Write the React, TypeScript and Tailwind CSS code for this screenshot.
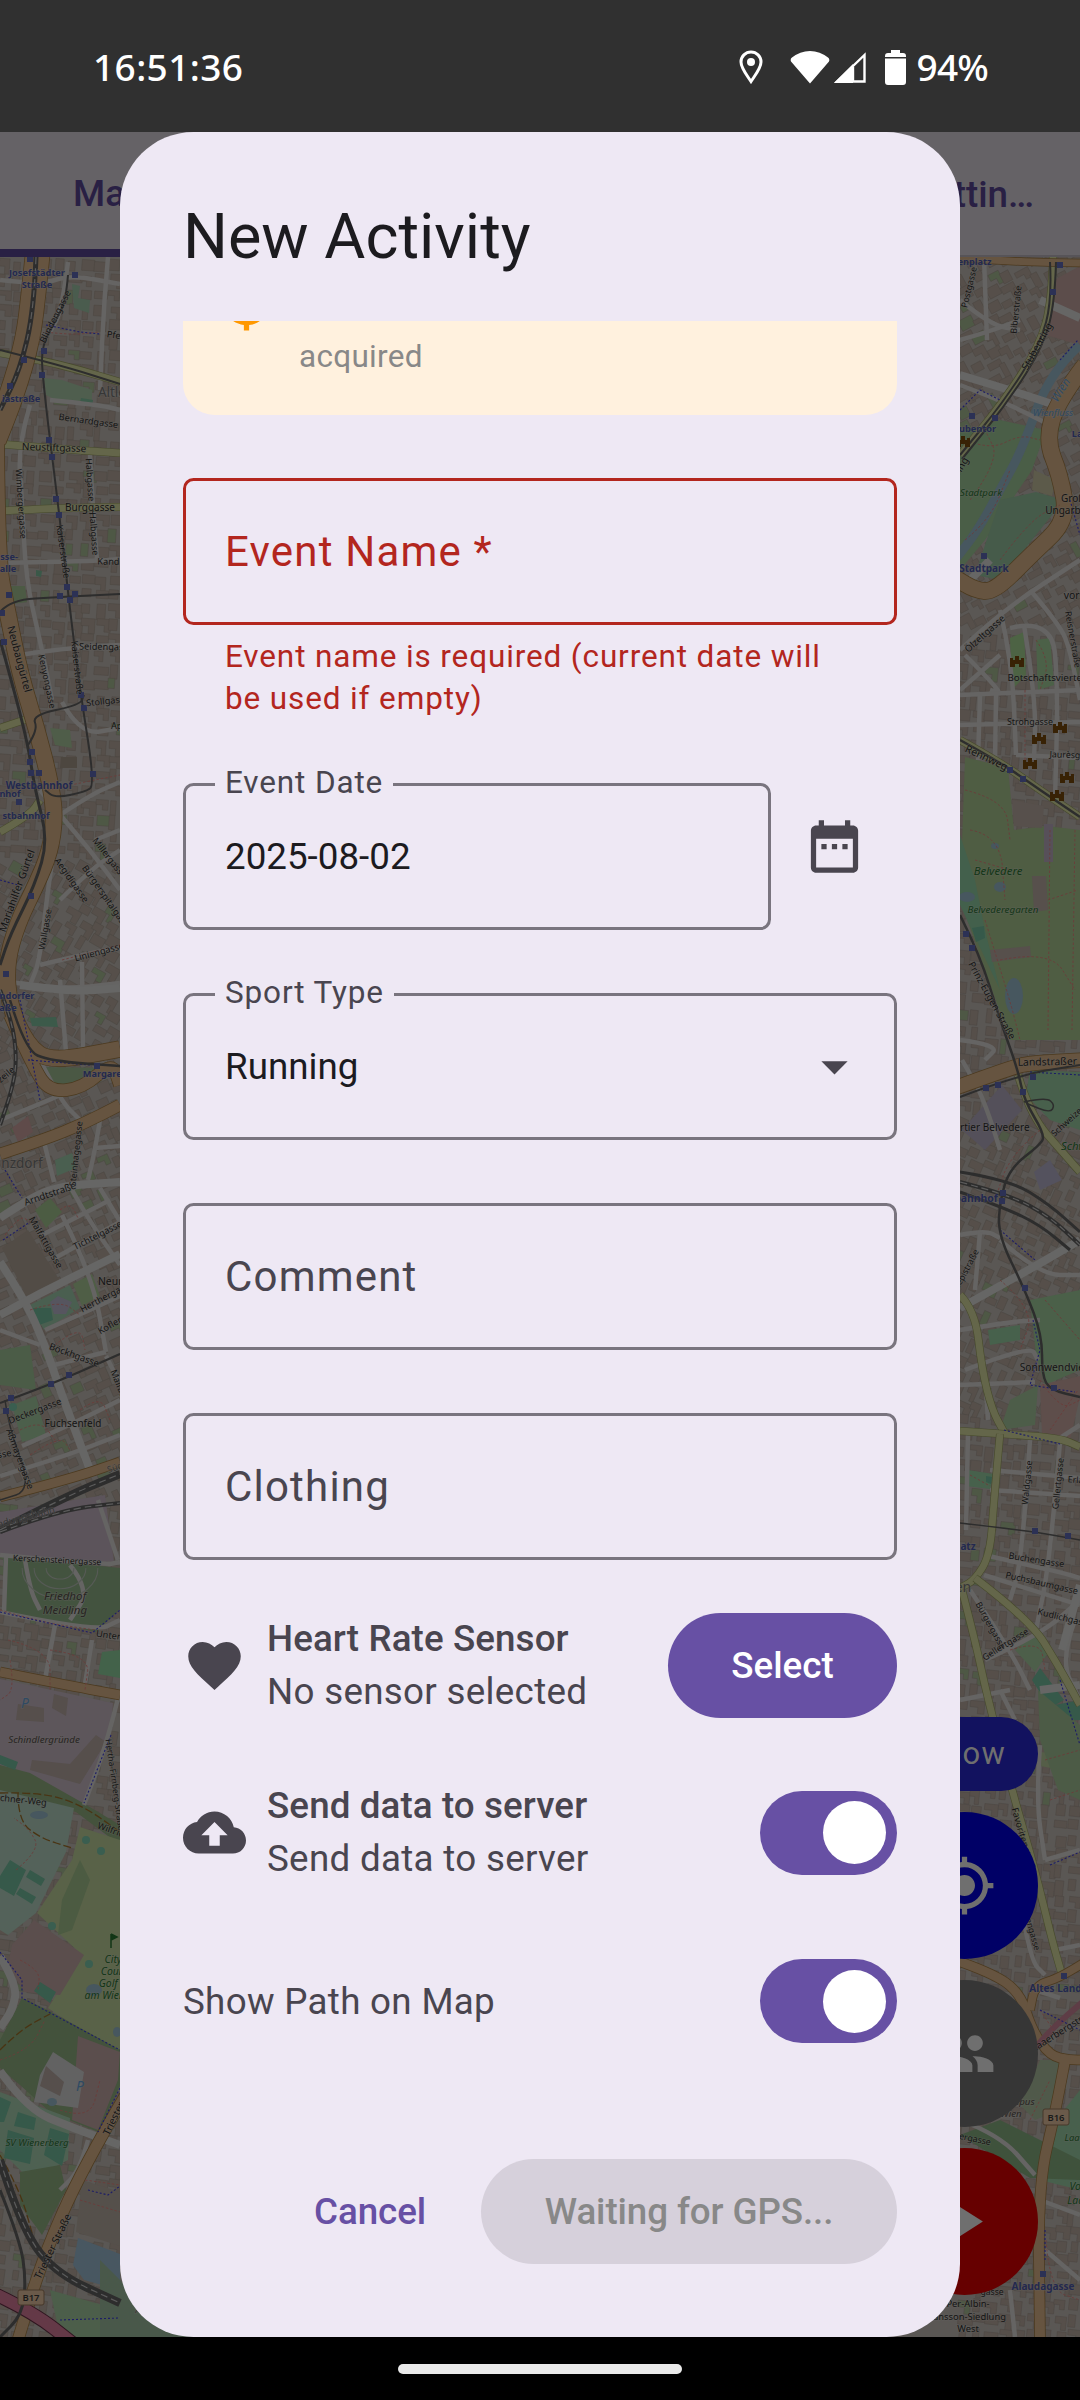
import React from "react";

type Pt = [number, number];
const line = (pts: Pt[]) => "M" + pts.map((p) => p.join(" ")).join("L");

/** Smooth open curve through the midpoints of the given points. */
const curve = (pts: Pt[]) => {
  let d = `M${pts[0][0]} ${pts[0][1]}`;
  for (let i = 1; i < pts.length - 1; i++) {
    const mx = (pts[i][0] + pts[i + 1][0]) / 2;
    const my = (pts[i][1] + pts[i + 1][1]) / 2;
    d += `Q${pts[i][0]} ${pts[i][1]} ${mx} ${my}`;
  }
  const e = pts[pts.length - 1];
  return d + `L${e[0]} ${e[1]}`;
};

const rng = (seed: number) => () => {
  seed = (seed * 1664525 + 1013904223) % 4294967296;
  return seed / 4294967296;
};

/** Building footprints for one strip of the city. */
function footprints(x0: number, x1: number, seed: number, tilt: (y: number) => number) {
  const r = rng(seed);
  const out: { d: string; t: string; f: string }[] = [];
  for (let y = 258; y < 2330; y += 15) {
    for (let x = x0; x < x1; x += 14) {
      const w = 9 + r() * 6;
      const h = 9 + r() * 7;
      const k = r();
      const d =
        k > 0.55
          ? `M0 0h${w}v${h}h${-w * 0.45}v${-h * 0.5}h${-w * 0.55}z`
          : k > 0.25
            ? `M0 0h${w}v${h * 0.7}h${-w}z`
            : `M0 0h${w * 0.6}v${h}h${-w * 0.6}z`;
      out.push({ d, t: `translate(${x + r() * 4} ${y + r() * 4}) rotate(${tilt(y)})`, f: r() > 0.93 ? "#4e5845" : "#564f4a" });
    }
  }
  return out;
}

const buildings = [
  ...footprints(-4, 122, 7, (y) => (y < 850 ? 4 : y < 1050 ? 30 : y < 1500 ? -24 : 8)),
  ...footprints(956, 1084, 23, (y) => (y < 620 ? -28 : y < 1100 ? 6 : y < 1400 ? 24 : 6)),
];

const areas: { c: string; p: Pt[] }[] = [
  { c: "#4a5c4e", p: [[72, 284], [80, 286], [78, 298], [90, 300], [89, 313], [74, 308]] },
  { c: "#4f5e4e", p: [[44, 378], [62, 380], [92, 390], [92, 405], [60, 402], [46, 395]] },
  { c: "#3c5a4a", p: [[81, 398], [93, 400], [92, 407], [80, 404]] },
  { c: "#4c5a44", p: [[10, 586], [25, 586], [27, 602], [12, 604]] },
  { c: "#3a5848", p: [[36, 570], [42, 571], [41, 577], [36, 576]] },
  { c: "#4f5d49", p: [[50, 728], [70, 730], [72, 748], [55, 745]] },
  { c: "#4d4740", p: [[61, 757], [77, 757], [77, 768], [60, 768]] },
  { c: "#3c5a4a", p: [[30, 1018], [56, 1017], [58, 1027], [32, 1026]] },
  { c: "#4a5844", p: [[40, 1067], [112, 1068], [100, 1082], [60, 1092]] },
  { c: "#5f4b4a", p: [[12, 1128], [28, 1116], [33, 1132], [18, 1142]] },
  { c: "#4a5f50", p: [[55, 1160], [72, 1153], [76, 1168], [57, 1176]] },
  { c: "#4c5c43", p: [[35, 1210], [50, 1198], [62, 1212], [46, 1228]] },
  { c: "#524c46", p: [[2, 1248], [28, 1230], [62, 1284], [26, 1296]] },
  { c: "#4a5f50", p: [[30, 1305], [70, 1285], [80, 1308], [44, 1330]] },
  { c: "#4f5e46", p: [[73, 1284], [92, 1274], [100, 1296], [82, 1306]] },
  { c: "#36594a", p: [[33, 1308], [51, 1308], [53, 1320], [39, 1325]] },
  { c: "#56555f", p: [[50, 1302], [58, 1296], [72, 1302], [66, 1314], [54, 1314]] },
  { c: "#4b5c47", p: [[0, 1350], [30, 1345], [36, 1390], [0, 1385]] },
  { c: "#4c5f4b", p: [[12, 1405], [36, 1396], [46, 1435], [22, 1442]] },
  { c: "#5c545b", p: [[0, 1512], [105, 1495], [114, 1562], [0, 1556]] },
  { c: "#43533f", p: [[3, 1556], [120, 1568], [120, 1609], [96, 1632], [3, 1612]] },
  { c: "#43624a", p: [[102, 1652], [120, 1650], [120, 1678], [98, 1674]] },
  { c: "#5d565b", p: [[0, 1679], [113, 1703], [110, 1736], [83, 1803], [0, 1768]] },
  { c: "#564f4c", p: [[32, 1760], [70, 1764], [96, 1735], [106, 1742], [80, 1784], [30, 1770]] },
  { c: "#564f4c", p: [[18, 1704], [44, 1708], [44, 1722], [16, 1720]] },
  { c: "#564f4c", p: [[54, 1694], [68, 1698], [66, 1716], [52, 1708]] },
  { c: "#44523c", p: [[0, 1765], [30, 1773], [83, 1803], [120, 1825], [120, 1845], [76, 1812], [0, 1792]] },
  { c: "#54625a", p: [[0, 1790], [74, 1808], [66, 1852], [36, 1913], [8, 1935], [0, 1930]] },
  { c: "#596248", p: [[80, 1827], [120, 1840], [120, 2056], [48, 2008], [82, 1955], [37, 1913], [72, 1860]] },
  { c: "#4c5b42", p: [[62, 1900], [80, 1860], [90, 1880], [72, 1930], [58, 1935]] },
  { c: "#5b4e4d", p: [[12, 1945], [34, 1920], [84, 1955], [60, 1995], [24, 1992], [8, 1965]] },
  { c: "#36594a", p: [[10, 1860], [26, 1870], [14, 1896], [0, 1888], [0, 1876]] },
  { c: "#36594a", p: [[30, 1870], [45, 1879], [41, 1886], [26, 1877]] },
  { c: "#36594a", p: [[20, 1888], [36, 1897], [32, 1904], [16, 1894]] },
  { c: "#36594a", p: [[40, 1982], [56, 1992], [50, 2003], [34, 1991]] },
  { c: "#36594a", p: [[0, 1755], [18, 1762], [15, 1770], [0, 1764]] },
  { c: "#43523c", p: [[22, 1998], [48, 2010], [120, 2050], [120, 2086], [98, 2132], [50, 2112], [20, 2085], [0, 2068], [0, 2040]] },
  { c: "#5b4e4d", p: [[78, 2036], [120, 2052], [118, 2080], [98, 2130], [72, 2120]] },
  { c: "#626262", p: [[53, 2052], [84, 2072], [78, 2108], [34, 2102], [40, 2075]] },
  { c: "#564f4c", p: [[46, 2066], [64, 2082], [60, 2096], [40, 2086]] },
  { c: "#4e6152", p: [[0, 2092], [70, 2118], [68, 2160], [30, 2180], [0, 2150]] },
  { c: "#36594a", p: [[0, 2097], [11, 2102], [4, 2122], [0, 2122]] },
  { c: "#36594a", p: [[18, 2112], [36, 2118], [34, 2130], [14, 2126]] },
  { c: "#36594a", p: [[50, 2128], [69, 2134], [62, 2166], [44, 2155]] },
  { c: "#36594a", p: [[8, 2130], [34, 2138], [30, 2164], [4, 2158]] },
  { c: "#43523c", p: [[20, 2172], [60, 2165], [66, 2190], [42, 2235], [20, 2205]] },
  { c: "#485761", p: [[78, 2238], [120, 2254], [120, 2290], [84, 2280], [73, 2265]] },
  { c: "#55504b", p: [[82, 2180], [120, 2192], [120, 2246], [76, 2232]] },
  { c: "#4c5e4a", p: [[50, 2290], [120, 2310], [132, 2337], [60, 2337]] },
  { c: "#49584a", p: [[150, 2310], [260, 2337], [100, 2337], [100, 2260]] },

  { c: "#5c4d4b", p: [[1054, 280], [1080, 266], [1080, 345], [1046, 335]] },
  { c: "#4a5e47", p: [[960, 432], [1000, 420], [1046, 430], [1032, 470], [985, 540], [960, 570]] },
  { c: "#465b4a", p: [[1000, 500], [1036, 492], [1064, 500], [1000, 580], [975, 575]] },
  { c: "#5c5a4a", p: [[1034, 470], [1056, 480], [1052, 496], [1032, 490]] },
  { c: "#4d6344", p: [[1010, 638], [1024, 632], [1026, 675], [1012, 690]] },
  { c: "#4c6148", p: [[1036, 640], [1050, 638], [1054, 685], [1038, 690]] },
  { c: "#4f5d43", p: [[965, 757], [1008, 768], [1014, 830], [1046, 826], [1080, 830], [1080, 1040], [1010, 1040], [960, 900]] },
  { c: "#43604c", p: [[960, 835], [975, 880], [985, 930], [1000, 990], [960, 905]] },
  { c: "#36594a", p: [[972, 928], [984, 926], [985, 938], [976, 942]] },
  { c: "#575059", p: [[1044, 824], [1053, 824], [1053, 862], [1044, 862]] },
  { c: "#57504c", p: [[1032, 876], [1046, 876], [1048, 910], [1034, 912]] },
  { c: "#57504c", p: [[1012, 800], [1044, 806], [1042, 828], [1014, 826]] },
  { c: "#57504c", p: [[990, 950], [1030, 946], [1031, 957], [992, 962]] },
  { c: "#48604c", p: [[1030, 1070], [1080, 1072], [1080, 1130], [1050, 1120], [1026, 1095]] },
  { c: "#54505a", p: [[962, 1130], [1002, 1085], [1022, 1110], [985, 1150]] },
  { c: "#54525e", p: [[1034, 1172], [1050, 1160], [1062, 1180], [1040, 1190]] },
  { c: "#4b6049", p: [[1030, 1300], [1080, 1290], [1080, 1370], [1045, 1385], [1036, 1355]] },
  { c: "#47614c", p: [[988, 1330], [1020, 1325], [1020, 1340], [990, 1345]] },
  { c: "#4d5d49", p: [[1010, 1400], [1038, 1385], [1035, 1425], [1000, 1430]] },
  { c: "#5e4e4b", p: [[1040, 1385], [1085, 1375], [1070, 1440], [1042, 1435]] },
  { c: "#47614c", p: [[968, 1470], [994, 1474], [990, 1489], [966, 1486]] },
  { c: "#36594a", p: [[986, 1476], [992, 1477], [991, 1484], [986, 1482]] },
  { c: "#4d5f4a", p: [[1015, 1650], [1032, 1634], [1050, 1650], [1035, 1672]] },
  { c: "#36594a", p: [[1040, 1668], [1064, 1700], [1050, 1708], [1032, 1680]] },
  { c: "#36594a", p: [[1050, 1706], [1080, 1700], [1080, 1720], [1046, 1722]] },
  { c: "#555e48", p: [[1040, 1752], [1064, 1754], [1062, 1770], [1040, 1766]] },
  { c: "#4c5b46", p: [[1038, 1690], [1080, 1725], [1080, 1800], [1058, 1790], [1040, 1740]] },
  { c: "#48604d", p: [[1048, 2130], [1080, 2090], [1080, 2190], [1040, 2180]] },
  { c: "#3f523c", p: [[960, 2135], [1000, 2120], [1080, 2160], [1080, 2180], [1030, 2178]] },
  { c: "#50594a", p: [[1040, 2060], [1062, 2060], [1060, 2110], [1035, 2120], [1020, 2105]] },
];

const water: Pt[][] = [[[1080, 345], [1050, 372], [1022, 450], [1000, 490], [978, 530], [955, 560]]];

const minor: Pt[][] = [
  [[0, 280], [40, 285], [70, 275], [120, 284]],
  [[108, 257], [104, 300], [100, 390]],
  [[68, 262], [62, 310], [50, 332]],
  [[30, 405], [18, 445], [22, 500], [26, 580], [40, 640], [52, 700]],
  [[0, 563], [96, 561], [120, 559]],
  [[90, 455], [93, 510], [97, 560]],
  [[20, 655], [66, 648], [120, 645]],
  [[62, 702], [80, 735], [120, 728]],
  [[50, 400], [100, 405], [120, 410]],
  [[40, 790], [60, 815], [90, 850], [120, 890]],
  [[60, 815], [50, 870], [40, 960], [30, 985]],
  [[60, 815], [90, 795], [120, 782]],
  [[40, 965], [80, 955], [120, 948]],
  [[60, 900], [90, 870], [120, 850]],
  [[10, 982], [60, 990], [120, 983]],
  [[82, 962], [83, 1050]],
  [[60, 980], [66, 1052]],
  [[95, 840], [120, 830]],
  [[0, 1120], [50, 1100], [82, 1085]],
  [[40, 1060], [60, 1100], [80, 1120]],
  [[44, 1142], [54, 1182]],
  [[100, 1120], [95, 1150], [88, 1180]],
  [[95, 1148], [120, 1146]],
  [[72, 1190], [90, 1222], [120, 1265]],
  [[100, 1188], [122, 1225]],
  [[42, 1235], [110, 1200]],
  [[55, 1258], [120, 1222]],
  [[62, 1215], [92, 1275], [106, 1352]],
  [[45, 1330], [90, 1310], [120, 1296]],
  [[0, 1330], [40, 1345]],
  [[54, 1365], [106, 1352]],
  [[0, 1476], [60, 1458], [120, 1435]],
  [[22, 1446], [70, 1425], [120, 1400]],
  [[106, 1356], [118, 1380]],
  [[0, 1555], [105, 1565], [120, 1562]],
  [[6, 1556], [4, 1612]],
  [[0, 1612], [95, 1632], [120, 1620]],
  [[98, 1500], [118, 1560]],
  [[55, 1625], [44, 1685]],
  [[92, 1640], [84, 1690]],
  [[25, 1560], [30, 1590], [40, 1610]],
  [[70, 1565], [90, 1590], [70, 1620]],
  [[120, 1690], [108, 1740], [84, 1805]],
  [[88, 2140], [80, 2170], [60, 2190]],
  [[960, 300], [990, 325], [1020, 330]],
  [[984, 257], [987, 340]],
  [[960, 340], [988, 332], [1020, 320]],
  [[960, 385], [1000, 400], [1050, 425]],
  [[1030, 590], [1060, 625], [1070, 650], [1080, 700]],
  [[960, 650], [1000, 612], [1080, 560]],
  [[965, 655], [1005, 695], [990, 690]],
  [[1000, 610], [1012, 660], [1016, 755]],
  [[1010, 628], [1052, 618], [1058, 690], [1055, 800]],
  [[1024, 625], [1036, 700], [1034, 760]],
  [[960, 695], [1080, 690]],
  [[960, 725], [1080, 722]],
  [[1016, 755], [1080, 758]],
  [[980, 695], [978, 760]],
  [[996, 695], [995, 765]],
  [[960, 690], [1000, 655]],
  [[960, 1040], [1000, 1045], [985, 1060]],
  [[1000, 1150], [985, 1100], [962, 1060]],
  [[960, 1235], [985, 1230], [1000, 1238]],
  [[980, 1232], [975, 1290]],
  [[1000, 1240], [1040, 1275], [1080, 1275]],
  [[960, 1330], [1010, 1322], [1040, 1320]],
  [[965, 1370], [1030, 1345], [1038, 1360]],
  [[960, 1385], [1035, 1382]],
  [[985, 1375], [988, 1420]],
  [[1060, 1438], [1080, 1425]],
  [[1030, 1440], [1022, 1560], [1010, 1600]],
  [[1060, 1442], [1050, 1560], [1036, 1630]],
  [[990, 1470], [1080, 1478]],
  [[990, 1490], [1080, 1496]],
  [[968, 1432], [966, 1530]],
  [[984, 1555], [1060, 1572], [1080, 1578]],
  [[984, 1575], [1080, 1605]],
  [[970, 1590], [1010, 1650], [1030, 1690]],
  [[985, 1660], [1040, 1635], [1080, 1600]],
  [[1075, 1620], [1060, 1660], [1080, 1700]],
  [[960, 1700], [1010, 1690]],
  [[1000, 1690], [1015, 1720]],
  [[1040, 1745], [1036, 1800], [1045, 1860]],
  [[1045, 1860], [1080, 1850]],
  [[1020, 1900], [1030, 1960], [1045, 1975]],
  [[1055, 1950], [1080, 1945]],
  [[1035, 1990], [1060, 1998]],
  [[960, 2120], [1000, 2135], [1035, 2175]],
  [[1040, 2200], [1080, 2215]],
  [[1045, 2250], [1080, 2280]],
  [[1010, 2290], [1015, 2337]],
];

const wide: Pt[][] = [
  [[0, 1262], [25, 1300], [45, 1345], [60, 1390], [90, 1470]],
  [[0, 1315], [40, 1293], [120, 1254]],
  [[0, 1218], [30, 1198], [60, 1186], [120, 1182]],
  [[0, 1956], [17, 1985], [13, 2009], [0, 2028]],
  [[0, 2071], [27, 2109], [73, 2128], [120, 2145]],
  [[960, 375], [1010, 390], [1055, 405]],
  [[960, 1308], [1020, 1275], [1080, 1240]],
  [[960, 590], [990, 560]],
  [[1040, 300], [1080, 318]],
  [[20, 985], [70, 992], [120, 988]],
  [[1080, 1585], [1062, 1650]],
  [[1040, 1690], [1080, 1685]],
];

const yellow: Pt[][] = [
  [[0, 353], [40, 360], [80, 370], [120, 382]],
  [[0, 444], [60, 449], [120, 453]],
  [[0, 511], [60, 508], [120, 507]],
  [[0, 728], [30, 718]],
  [[0, 832], [30, 815], [40, 800]],
  [[1053, 257], [1052, 300], [1040, 345], [1005, 400], [960, 455]],
  [[960, 740], [1000, 762], [1040, 790], [1080, 817]],
  [[1018, 1075], [1030, 1115], [1065, 1155], [1080, 1172]],
  [[960, 1295], [975, 1310], [982, 1370], [992, 1410], [1004, 1432]],
  [[960, 1431], [1004, 1434], [1060, 1438], [1080, 1447]],
  [[1000, 1434], [994, 1500], [990, 1555], [975, 1580], [960, 1588]],
  [[975, 1578], [1030, 1620], [1058, 1665], [1080, 1705]],
  [[962, 1590], [975, 1640], [988, 1700], [1012, 1790], [1035, 1870], [1052, 1940], [1062, 1975]],
];

const orange: { w: number; p: Pt[] }[] = [
  { w: 24, p: [[38, 250], [34, 290], [28, 340], [12, 395], [-6, 440]] },
  { w: 16, p: [[-4, 440], [-3, 560], [7, 610], [20, 674], [37, 730], [50, 781], [55, 816], [50, 852], [37, 883], [17, 924], [6, 964], [9, 1005], [27, 1045], [50, 1062], [120, 1049]] },
  { w: 12, p: [[10, 1015], [33, 1067], [50, 1092], [83, 1088], [112, 1062], [120, 1085]] },
  { w: 11, p: [[0, 1154], [43, 1140], [83, 1124], [120, 1105]] },
  { w: 9, p: [[0, 1497], [67, 1480], [120, 1462]] },
  { w: 9, p: [[0, 1672], [60, 1684], [120, 1695]] },
  { w: 11, p: [[125, 2096], [83, 2167], [43, 2257], [18, 2340]] },
  { w: 7, p: [[960, 258], [1020, 262], [1080, 263]] },
  { w: 16, p: [[1085, 365], [1058, 400], [1046, 440], [1060, 475], [1068, 520], [1030, 556], [994, 592], [975, 590], [955, 578]] },
  { w: 14, p: [[955, 1088], [1010, 1068], [1030, 1063], [1085, 1060]] },
  { w: 9, p: [[955, 1960], [990, 1972], [1020, 1992], [1032, 2030], [1050, 2056], [1070, 2060], [1085, 2060]] },
  { w: 8, p: [[1085, 1962], [1060, 1978], [1035, 1985], [1030, 2010]] },
  { w: 10, p: [[1066, 2055], [1056, 2110], [1038, 2185], [1040, 2337]] },
];

const rail: { w: number; p: Pt[] }[] = [
  { w: 5, p: [[36, 257], [34, 310], [20, 370], [0, 410]] },
  { w: 2, p: [[0, 350], [60, 365], [120, 384]] },
  { w: 2, p: [[68, 275], [66, 300], [56, 320], [42, 345], [42, 375], [60, 520], [70, 610], [80, 690], [95, 785], [85, 792], [55, 798], [45, 790]] },
  { w: 2, p: [[0, 612], [10, 600], [60, 597], [120, 594]] },
  { w: 3, p: [[0, 640], [14, 690], [28, 745], [35, 790], [48, 840], [35, 885], [10, 935], [0, 965]] },
  { w: 2, p: [[28, 745], [38, 730], [32, 715], [80, 705], [84, 695]] },
  { w: 4, p: [[0, 990], [12, 1020], [17, 1060], [12, 1090], [0, 1125]] },
  { w: 2.5, p: [[10, 1000], [25, 1050], [50, 1061], [120, 1066]] },
  { w: 2, p: [[0, 1403], [50, 1385], [120, 1354]] },
  { w: 1.5, p: [[5, 1400], [8, 1425], [32, 1490], [0, 1500]] },
  { w: 8, p: [[0, 1530], [67, 1496], [120, 1474]] },
  { w: 4, p: [[0, 1532], [60, 1510], [120, 1503]] },
  { w: 8, p: [[0, 2160], [20, 2224], [53, 2272], [120, 2303]] },
  { w: 3, p: [[0, 2190], [20, 2240], [26, 2280], [22, 2315], [0, 2337]] },
  { w: 2, p: [[1050, 262], [1052, 300], [1040, 345], [1005, 400], [960, 455]] },
  { w: 2, p: [[1056, 262], [1055, 300], [1044, 345], [1008, 402], [962, 459]] },
  { w: 2.5, p: [[960, 740], [1000, 762], [1040, 790], [1080, 817]] },
  { w: 2.5, p: [[960, 915], [980, 955], [1000, 1020], [1018, 1070], [1024, 1100], [1045, 1135], [1040, 1145], [1010, 1168], [1000, 1200], [998, 1235], [1025, 1290], [1042, 1335], [1042, 1375], [1050, 1390], [1080, 1397]] },
  { w: 2, p: [[960, 1097], [1018, 1075], [1080, 1065]] },
  { w: 1.5, p: [[1024, 1102], [1046, 1097], [1055, 1105], [1050, 1113], [1028, 1104]] },
  { w: 3, p: [[960, 1172], [1010, 1180], [1050, 1205], [1080, 1232]] },
  { w: 4, p: [[960, 1182], [1010, 1195], [1050, 1217], [1080, 1245]] },
  { w: 3, p: [[960, 1192], [1005, 1208], [1040, 1225], [1070, 1250]] },
  { w: 1.5, p: [[960, 1523], [1030, 1531], [1080, 1540]] },
];

const paths: Pt[][] = [
  [[46, 332], [70, 335], [100, 332]],
  [[62, 960], [120, 945]],
  [[48, 790], [70, 785], [120, 775]],
  [[10, 1660], [15, 1690], [0, 1700]],
  [[0, 1610], [40, 1622], [95, 1630]],
  [[8, 1640], [50, 1650], [50, 1690]],
  [[50, 1650], [90, 1655], [85, 1690]],
  [[16, 1870], [40, 1850], [30, 1830], [14, 1818]],
  [[20, 1960], [40, 1970], [38, 1990]],
  [[0, 2060], [30, 2050], [45, 2020]],
  [[60, 2110], [90, 2120], [100, 2080]],
  [[85, 2180], [120, 2185]],
  [[80, 2200], [120, 2212]],
  [[60, 1210], [70, 1202], [78, 1218]],
  [[5, 1235], [20, 1215], [30, 1222]],
  [[30, 1310], [60, 1300], [80, 1315]],
  [[55, 1345], [80, 1325], [85, 1350]],
  [[20, 1430], [40, 1420], [55, 1440]],
  [[30, 1455], [60, 1435], [70, 1450]],
  [[80, 1410], [100, 1395], [110, 1420]],
  [[965, 440], [990, 450], [1020, 435], [1040, 440]],
  [[970, 500], [1000, 460], [985, 430]],
  [[965, 540], [990, 520], [1010, 470]],
  [[1000, 560], [1030, 520], [1060, 505]],
  [[1036, 640], [1050, 660], [1040, 690]],
  [[1025, 690], [1025, 760]],
  [[965, 790], [1005, 800], [1010, 840]],
  [[970, 830], [1000, 835], [1005, 900]],
  [[975, 860], [1010, 870]],
  [[1050, 830], [1048, 1030]],
  [[1075, 830], [1072, 1030]],
  [[1048, 900], [1078, 890]],
  [[985, 920], [1010, 1000], [1020, 1040]],
  [[1000, 960], [1050, 950], [1075, 990]],
  [[1040, 1130], [1010, 1155], [995, 1200]],
  [[1000, 1280], [1035, 1310], [1020, 1350]],
  [[1045, 1300], [1080, 1340]],
  [[1040, 1380], [1060, 1410], [1080, 1400]],
  [[1050, 1430], [1078, 1390]],
  [[970, 1475], [990, 1486]],
  [[1010, 1650], [1040, 1640], [1045, 1670]],
  [[1045, 1760], [1080, 1750]],
  [[1050, 1800], [1080, 1790]],
  [[1040, 2010], [1060, 2040]],
  [[1030, 2120], [1050, 2080]],
  [[1046, 2240], [1050, 2290], [1080, 2300]],
];

const bluePaths: Pt[][] = [
  [[46, 325], [80, 332], [100, 334]],
  [[0, 880], [18, 885]],
  [[28, 1060], [90, 1065]],
  [[20, 1000], [32, 1060], [40, 1100]],
  [[5, 1170], [22, 1198]],
  [[3, 1240], [30, 1222]],
  [[0, 1612], [92, 1633], [120, 1610]],
  [[111, 1735], [84, 1803]],
  [[0, 1952], [22, 1980], [22, 1998], [120, 2050]],
  [[120, 2088], [98, 2132]],
  [[88, 2190], [108, 2195], [120, 2186]],
  [[60, 2320], [120, 2318]],
  [[960, 410], [980, 390], [1000, 400]],
  [[1060, 360], [1078, 340]],
  [[1070, 500], [1080, 535]],
  [[1030, 1072], [1080, 1075]],
  [[1000, 1230], [1035, 1260]],
  [[1033, 1320], [1040, 1350], [1030, 1385], [1075, 1392]],
  [[1004, 1430], [1060, 1444]],
  [[1060, 1680], [1080, 1745]],
  [[1050, 1865], [1080, 1852]],
  [[1040, 2010], [1080, 2030]],
  [[1045, 2230], [1045, 2260]],
];

const stops: Pt[] = [
  [75, 275], [44, 351], [24, 360], [42, 375], [10, 386], [49, 440], [52, 457], [56, 499], [59, 515], [67, 587], [70, 600], [60, 596], [75, 594], [9, 595], [2, 613],
  [4, 642], [81, 695], [84, 708], [32, 752], [30, 762], [31, 773], [39, 773], [93, 774], [19, 802], [31, 896], [6, 974], [97, 1066], [69, 1375], [51, 1384], [11, 1398], [6, 1411],
  [30, 259], [1060, 265], [1053, 292], [972, 416], [995, 418], [984, 556], [1010, 770], [1023, 779], [966, 934], [972, 948], [986, 1088], [998, 1085], [1023, 1092], [1033, 1077],
  [1003, 1193], [1002, 1201], [1025, 1288], [1054, 1388], [1035, 1531], [1068, 1536], [1064, 1976], [1043, 2274], [995, 1742],
];

interface Label {
  t: string;
  x: number;
  y: number;
  s?: number;
  r?: number;
  k?: "street" | "station" | "green" | "place" | "water" | "area";
}

const labels: Label[] = [
  { t: "Josefstädter", x: 37, y: 276, k: "station" },
  { t: "Straße", x: 37, y: 288, k: "station" },
  { t: "Blindengasse", x: 58, y: 318, r: -63 },
  { t: "Pfeilgasse", x: 128, y: 340, r: 7 },
  { t: "iastraße", x: 21, y: 402, k: "station" },
  { t: "Altlerchenfeld", x: 142, y: 397, s: 13.5, k: "place" },
  { t: "Bernardgasse", x: 88, y: 424, r: 8 },
  { t: "Neustiftgasse", x: 54, y: 451, r: 2, s: 10 },
  { t: "Burggasse", x: 90, y: 511, s: 10 },
  { t: "Wimbergergasse", x: 18, y: 504, r: 86, s: 8.8 },
  { t: "Halbgasse", x: 87, y: 480, r: 86, s: 8.8 },
  { t: "Halbgasse", x: 91, y: 534, r: 86, s: 8.8 },
  { t: "Kaiserstraße", x: 60, y: 552, r: 82 },
  { t: "sse-", x: 9, y: 560, k: "station" },
  { t: "alle", x: 8, y: 572, k: "station" },
  { t: "Kandlgasse", x: 122, y: 565, r: 1 },
  { t: "Neubaugürtel", x: 16, y: 660, r: 75, s: 10.4 },
  { t: "Kenyongasse", x: 44, y: 682, r: 78, s: 8.8 },
  { t: "Kaiserstraße", x: 74, y: 668, r: 84 },
  { t: "Seidengasse", x: 106, y: 650, r: 1 },
  { t: "Stollgasse", x: 108, y: 704, r: -6 },
  { t: "Apollogasse", x: 137, y: 729 },
  { t: "Westbahnhof", x: 39, y: 789, k: "station", s: 10 },
  { t: "nhof", x: 10, y: 797, k: "station" },
  { t: "stbahnhof", x: 26, y: 819, k: "station" },
  { t: "Mariahilfer Gürtel", x: 20, y: 892, r: -70, s: 10.4 },
  { t: "Aegidigasse", x: 69, y: 882, r: 55 },
  { t: "Millergasse", x: 107, y: 860, r: 52 },
  { t: "Bürgerspitalgasse", x: 104, y: 900, r: 55 },
  { t: "Wallgasse", x: 48, y: 930, r: -80, s: 8.8 },
  { t: "Liniengasse", x: 100, y: 955, r: -15 },
  { t: "ndorfer", x: 17, y: 999, k: "station" },
  { t: "aße", x: 8, y: 1011, k: "station" },
  { t: "zeile", x: 8, y: 1077, r: -40 },
  { t: "Margaretengürtel", x: 124, y: 1077, k: "station" },
  { t: "nzdorf", x: 22, y: 1168, s: 13.5, k: "place" },
  { t: "Arndtstraße", x: 51, y: 1197, r: -19, s: 9.6 },
  { t: "Steinhagegasse", x: 79, y: 1154, r: -84, s: 8.8 },
  { t: "Malfattigasse", x: 43, y: 1244, r: 60 },
  { t: "Tichtelgasse", x: 99, y: 1238, r: -27 },
  { t: "Neumargareten", x: 137, y: 1285, s: 10.4 },
  { t: "Herthergasse", x: 108, y: 1299, r: -28 },
  { t: "Koflergasse", x: 122, y: 1322, r: -30 },
  { t: "Böckhgasse", x: 73, y: 1358, r: 20, s: 9.4 },
  { t: "Malfattigasse", x: 121, y: 1398, r: 68 },
  { t: "Deckergasse", x: 36, y: 1414, r: -21, s: 9.4 },
  { t: "Fuchsenfeld", x: 73, y: 1427, s: 10 },
  { t: "Aßmayergasse", x: 17, y: 1460, r: 70, s: 9.2 },
  { t: "sse", x: 5, y: 1457, r: -10 },
  { t: "Südgürtel", x: 128, y: 1466, r: -20, k: "place", s: 9 },
  { t: "adungsbahn", x: 27, y: 1520, r: -15, k: "place", s: 10 },
  { t: "Kerschensteinergasse", x: 57, y: 1563, r: 3, s: 8.6 },
  { t: "Friedhof", x: 65, y: 1600, k: "area", s: 11.5 },
  { t: "Meidling", x: 65, y: 1614, k: "area", s: 11.5 },
  { t: "Unter-Meidling", x: 128, y: 1641, r: 8 },
  { t: "P", x: 25, y: 1708, k: "water", s: 14 },
  { t: "Schindlergründe", x: 44, y: 1743, k: "area", s: 9.8 },
  { t: "irchner-Weg", x: 20, y: 1803, r: 6 },
  { t: "Hertha-Firnberg-Straße", x: 112, y: 1785, r: 82, s: 8.4 },
  { t: "Wilfriedgasse", x: 124, y: 1838, r: 20 },
  { t: "City &", x: 118, y: 1963, k: "green", s: 10.4 },
  { t: "Country", x: 119, y: 1975, k: "green", s: 10.4 },
  { t: "Golf Club", x: 120, y: 1987, k: "green", s: 10.4 },
  { t: "am Wienerberg", x: 120, y: 1999, k: "green", s: 10.4 },
  { t: "P", x: 80, y: 2091, k: "water", s: 14 },
  { t: "Triester Straße", x: 124, y: 2105, r: -64, s: 10 },
  { t: "SV Wienerberg", x: 37, y: 2146, k: "green", s: 9.8 },
  { t: "Triester Straße", x: 56, y: 2248, r: -64, s: 10.4 },
  { t: "Pottendorfer", x: 160, y: 2322, r: 20, k: "place", s: 9 },

  { t: "Schwedenplatz", x: 957, y: 265, k: "station" },
  { t: "Postgasse", x: 972, y: 288, r: -76, s: 8.8 },
  { t: "Biberstraße", x: 1019, y: 310, r: -84, s: 8.8 },
  { t: "Stubenring", x: 1040, y: 348, r: -61, s: 10 },
  { t: "Wien", x: 1064, y: 392, r: -58, k: "water", s: 11.5 },
  { t: "Wienfluss", x: 1053, y: 416, k: "water", s: 9.6 },
  { t: "Stubentor", x: 973, y: 432, k: "station" },
  { t: "Landstraße", x: 1098, y: 437, k: "station" },
  { t: "ring", x: 964, y: 468, r: -60, s: 10 },
  { t: "Stadtpark", x: 981, y: 496, k: "green", s: 9.6 },
  { t: "Großungarn", x: 1090, y: 502, s: 10 },
  { t: "Ungarbrücke", x: 1076, y: 514, s: 10 },
  { t: "Stadtpark", x: 984, y: 572, k: "station", s: 10 },
  { t: "vorstadt", x: 1084, y: 599, s: 10.4 },
  { t: "Ölzeltgasse", x: 987, y: 636, r: -42, s: 9.4 },
  { t: "Reisnerstraße", x: 1070, y: 640, r: 80, s: 8.8 },
  { t: "Botschaftsviertel", x: 1046, y: 681, s: 9.8 },
  { t: "Strohgasse", x: 1030, y: 725, s: 8.8 },
  { t: "Rennweg", x: 985, y: 761, r: 25, s: 10.4 },
  { t: "Jaurèsgasse", x: 1074, y: 758, r: 2, s: 8.8 },
  { t: "Belvedere", x: 998, y: 875, k: "green", s: 11.4 },
  { t: "Belvederegarten", x: 1003, y: 913, k: "green", s: 9.8 },
  { t: "Prinz-Eugen-Straße", x: 989, y: 1002, r: 61, s: 9.6 },
  { t: "Landstraßer Gürtel", x: 1064, y: 1065, s: 10.4, r: -1 },
  { t: "Quartier Belvedere", x: 985, y: 1131, s: 10 },
  { t: "Schweizergarten", x: 1080, y: 1114, r: -42, s: 8.8 },
  { t: "Schweizer", x: 1086, y: 1150, k: "green", s: 11.5 },
  { t: "Hauptbahnhof", x: 960, y: 1202, k: "station", s: 10.4 },
  { t: "Hausepistraße", x: 965, y: 1278, r: -62, s: 8.8 },
  { t: "Sonnwendviertel", x: 1060, y: 1371, s: 10.2 },
  { t: "Waldgasse", x: 1030, y: 1483, r: -84, s: 8.8 },
  { t: "Gellertgasse", x: 1061, y: 1484, r: -84, s: 8.8 },
  { t: "Erlachgasse", x: 1092, y: 1484, r: 4, s: 8.8 },
  { t: "atz", x: 968, y: 1550, k: "station", s: 10 },
  { t: "Buchengasse", x: 1036, y: 1563, r: 9, s: 9 },
  { t: "Puchsbaumgasse", x: 1041, y: 1586, r: 13, s: 9 },
  { t: "en", x: 963, y: 1592, k: "place", s: 14 },
  { t: "Kudlichgasse", x: 1064, y: 1621, r: 14, s: 9 },
  { t: "Bürgergasse", x: 988, y: 1627, r: 61, s: 8.8 },
  { t: "Gellertgasse", x: 1007, y: 1647, r: -32, s: 9 },
  { t: "Quellenstraße", x: 990, y: 1758, k: "station", s: 9 },
  { t: "Favoritenstraße", x: 1021, y: 1842, r: 74, s: 9.4 },
  { t: "engasse", x: 1030, y: 1935, r: 74, s: 8.6 },
  { t: "Altes Landgut", x: 1064, y: 1992, k: "station", s: 10 },
  { t: "Laaerbergstraße", x: 1066, y: 2032, r: -32, s: 9.6 },
  { t: "Campus", x: 1017, y: 2105, k: "area", s: 9.8 },
  { t: "Wien", x: 1011, y: 2117, k: "area", s: 9.8 },
  { t: "bergergasse", x: 965, y: 2140, r: 12, s: 8.8 },
  { t: "Laaer Wald", x: 1088, y: 2141, k: "green", s: 9.4 },
  { t: "Volkspark", x: 1092, y: 2190, k: "green", s: 10.4 },
  { t: "Laaerberg", x: 1091, y: 2204, k: "green", s: 10.4 },
  { t: "Alaudagasse", x: 1043, y: 2290, k: "station", s: 10 },
  { t: "gasse", x: 992, y: 2295, s: 8.6 },
  { t: "Per-Albin-", x: 968, y: 2307, s: 9.4 },
  { t: "Hansson-Siedlung", x: 966, y: 2320, s: 9.4 },
  { t: "West", x: 968, y: 2332, s: 9.4 },
];

const labelFill = {
  street: "#141414",
  station: "#23294f",
  green: "#123616",
  place: "#363636",
  water: "#2f4a63",
  area: "#272422",
};

const castles: Pt[] = [[963, 441], [1017, 661], [1039, 738], [1060, 727], [1030, 763], [1067, 777], [1057, 795]];

function CityMap() {
  return (
    <svg className="absolute inset-0 h-full w-full" viewBox="0 257 1080 2080" preserveAspectRatio="none" fontFamily="'Noto Sans', sans-serif">
      <rect x="0" y="257" width="1080" height="2080" fill="#5a5754" />
      {buildings.map((b, i) => (
        <path key={i} d={b.d} transform={b.t} fill={b.f} stroke="#4b4641" strokeWidth="0.5" />
      ))}
      {areas.map((a, i) => (
        <path key={i} d={line(a.p) + "Z"} fill={a.c} />
      ))}
      {water.map((w, i) => (
        <path key={i} d={curve(w)} fill="none" stroke="#47575f" strokeWidth="9" />
      ))}
      <ellipse cx="1014" cy="996" rx="9" ry="18" fill="#47575f" />
      <ellipse cx="967" cy="897" rx="8" ry="5" fill="#47575f" />
      <ellipse cx="1000" cy="887" rx="6" ry="5" fill="#47575f" />
      <ellipse cx="995" cy="846" rx="4" ry="3" fill="#47575f" />
      <ellipse cx="39" cy="1815" rx="9" ry="4" fill="#47575f" />
      <ellipse cx="94" cy="1990" rx="8" ry="6" fill="#47575f" />
      <ellipse cx="117" cy="2032" rx="4" ry="5" fill="#47575f" />
      <ellipse cx="52" cy="2102" rx="5" ry="4" fill="#47575f" />
      {[[52, 1926], [86, 1840], [101, 1851], [89, 1964], [13, 1407]].map(([x, y]) => (
        <ellipse key={x} cx={x} cy={y} rx="4" ry="4" fill="#3a5e50" />
      ))}
      <g fill="none" strokeLinejoin="round">
        {minor.map((p, i) => (
          <path key={i} d={curve(p)} stroke="#656463" strokeWidth="4.5" />
        ))}
        {wide.map((p, i) => (
          <path key={i} d={curve(p)} stroke="#666665" strokeWidth="8" />
        ))}
        {yellow.map((p, i) => (
          <g key={i}>
            <path d={curve(p)} stroke="#474a2c" strokeWidth="8" />
            <path d={curve(p)} stroke="#64664a" strokeWidth="6.8" />
          </g>
        ))}
        {orange.map((o, i) => (
          <path key={i} d={curve(o.p)} stroke="#4c3a1f" strokeWidth={o.w + 1.5} />
        ))}
        {orange.map((o, i) => (
          <path key={i} d={curve(o.p)} stroke="#665440" strokeWidth={o.w} />
        ))}
        <path d={curve([[-5, 2294], [33, 2312], [75, 2345]])} stroke="#2f1620" strokeWidth="14" />
        <path d={curve([[-5, 2294], [33, 2312], [75, 2345]])} stroke="#643947" strokeWidth="12" />
        <path d={curve([[1030, 2054], [1050, 2030], [1085, 2000]])} stroke="#5e3d46" strokeWidth="6" />
        {paths.map((p, i) => (
          <path key={i} d={curve(p)} stroke="#6b3c3a" strokeWidth="0.9" strokeDasharray="2.5 2" />
        ))}
        {bluePaths.map((p, i) => (
          <path key={i} d={line(p)} stroke="#1c1c68" strokeWidth="1.1" strokeDasharray="2 2" />
        ))}
        <path d={curve([[0, 1793], [40, 1792], [82, 1805], [120, 1832]])} stroke="#4a3413" strokeWidth="1.3" strokeDasharray="8 3" />
        <path d={curve([[18, 1793], [18, 1820], [40, 1838], [72, 1848]])} stroke="#4a3413" strokeWidth="1.3" strokeDasharray="8 3" />
        <path d={curve([[0, 2050], [20, 2030], [50, 2014]])} stroke="#4a3413" strokeWidth="1.3" strokeDasharray="8 3" />
        <path d={curve([[0, 2155], [20, 2190], [34, 2240]])} stroke="#4a3413" strokeWidth="1.3" strokeDasharray="8 3" />
        {[14, 26, 38].map((r) => (
          <ellipse key={r} cx="60" cy="1568" rx={r} ry={r * 0.8} stroke="#565a55" strokeWidth="1.2" clipPath="inset(50% 0 0 0)" />
        ))}
        {rail.map((l, i) => (
          <path key={i} d={curve(l.p)} stroke="#2d2d2d" strokeWidth={l.w} />
        ))}
        {rail
          .filter((l) => l.w >= 4)
          .map((l, i) => (
            <path key={i} d={curve(l.p)} stroke="#5c5c5c" strokeWidth="1.2" strokeDasharray="7 4" />
          ))}
      </g>
      {stops.map(([x, y], i) => (
        <rect key={i} x={x - 3} y={y - 3} width="6" height="6" fill="#2c3155" />
      ))}
      {castles.map(([x, y], i) => (
        <path key={i} d={`M${x - 7} ${y + 6}v-9h3v2h2v-4h4v4h2v-2h3v9h-5v-3h-4v3z`} fill="#382205" />
      ))}
      <path d="M111 1934v14M111 1934l6 3-6 3" stroke="#123616" strokeWidth="1.5" fill="#123616" />
      <g textAnchor="middle">
        {labels.map((l, i) => {
          const k = l.k ?? "street";
          return (
            <text
              key={i}
              transform={`translate(${l.x} ${l.y}) rotate(${l.r ?? 0})`}
              fontSize={l.s ?? 9.2}
              fill={labelFill[k]}
              fontWeight={k === "station" ? 700 : 400}
              fontStyle={k === "green" || k === "area" || k === "water" ? "italic" : "normal"}
              stroke="#64626066"
              strokeWidth="1.4"
              paintOrder="stroke"
            >
              {l.t}
            </text>
          );
        })}
        <rect x="18" y="2290" width="26" height="15" rx="2" fill="#6a5a4a" stroke="#46382a" />
        <text x="31" y="2301" fontSize="9.5" fontWeight="600" fill="#1a1a1a">B17</text>
        <rect x="1043" y="2109" width="26" height="16" rx="2" fill="#6a5a4a" stroke="#46382a" />
        <text x="1056" y="2120.500" fontSize="9.5" fontWeight="600" fill="#1a1a1a">B16</text>
      </g>
    </svg>
  );
}

function Icon({ d, className }: { d: string; className: string }) {
  return (
    <svg viewBox="0 0 24 24" className={className} fill="currentColor">
      <path d={d} />
    </svg>
  );
}

const icons = {
  gps: "M20.94 11c-.46-4.17-3.77-7.48-7.94-7.94V1h-2v2.06C6.83 3.52 3.52 6.83 3.06 11H1v2h2.06c.46 4.17 3.77 7.48 7.94 7.94V23h2v-2.06c4.17-.46 7.48-3.77 7.94-7.94H23v-2h-2.06zM12 19c-3.87 0-7-3.13-7-7s3.13-7 7-7 7 3.13 7 7-3.13 7-7 7z",
  locate:
    "M12 8c-2.21 0-4 1.79-4 4s1.79 4 4 4 4-1.79 4-4-1.79-4-4-4zm8.94 3c-.46-4.17-3.77-7.48-7.94-7.94V1h-2v2.06C6.83 3.52 3.52 6.83 3.06 11H1v2h2.06c.46 4.17 3.77 7.48 7.94 7.94V23h2v-2.06c4.17-.46 7.48-3.77 7.94-7.94H23v-2h-2.06zM12 19c-3.87 0-7-3.13-7-7s3.13-7 7-7 7 3.13 7 7-3.13 7-7 7z",
  people:
    "M16 11c1.66 0 2.99-1.34 2.99-3S17.66 5 16 5c-1.66 0-3 1.34-3 3s1.34 3 3 3zm-8 0c1.66 0 2.99-1.34 2.99-3S9.66 5 8 5C6.34 5 5 6.34 5 8s1.34 3 3 3zm0 2c-2.33 0-7 1.17-7 3.5V19h14v-2.5c0-2.33-4.67-3.5-7-3.5zm8 0c-.29 0-.62.02-.97.05 1.16.84 1.97 1.97 1.97 3.45V19h6v-2.5c0-2.33-4.67-3.5-7-3.5z",
  play: "M8 5v14l11-7z",
  calendar:
    "M9 11H7v2h2v-2zm4 0h-2v2h2v-2zm4 0h-2v2h2v-2zm2-7h-1V2h-2v2H8V2H6v2H5c-1.11 0-1.99.9-1.99 2L3 20c0 1.1.89 2 2 2h14c1.1 0 2-.9 2-2V6c0-1.1-.9-2-2-2zm0 16H5V9h14v11z",
  arrow: "M7 10l5 5 5-5z",
  heart:
    "M12 21.35l-1.45-1.32C5.4 15.36 2 12.28 2 8.5 2 5.42 4.42 3 7.5 3c1.74 0 3.41.81 4.5 2.09C13.09 3.81 14.76 3 16.5 3 19.58 3 22 5.42 22 8.5c0 3.78-3.4 6.86-8.55 11.54L12 21.35z",
  cloud:
    "M19.35 10.04C18.67 6.59 15.64 4 12 4 9.11 4 6.6 5.64 5.35 8.04 2.34 8.36 0 10.91 0 14c0 3.31 2.69 6 6 6h13c2.76 0 5-2.24 5-5 0-2.64-2.05-4.78-4.65-4.96zM14 13v4h-4v-4H7l5-5 5 5h-3z",
};

function StatusBar() {
  return (
    <div className="flex h-[132px] items-center justify-between bg-[#303030] pl-[93px] pr-[92px] pt-[2px] font-['Noto_Sans',sans-serif] text-[37px] font-medium text-white">
      <span className="tracking-[0.4px]">16:51:36</span>
      <div className="flex items-center">
        <svg className="mr-[27px] h-[34px] w-[24px]" viewBox="0 0 24 34" fill="none">
          <path d="M12 31.5C7 24 2 18 2 12a10 10 0 0 1 20 0c0 6-5 12-10 19.5z" stroke="white" strokeWidth="3" />
          <circle cx="12" cy="12" r="4" fill="white" />
        </svg>
        <svg className="mr-[3px] h-[34px] w-[40px]" viewBox="0 0 40 34" fill="white">
          <path d="M20 33.5L1 11.5Q0 9 2 7.5A28 28 0 0 1 38 7.5Q40 9 39 11.5z" />
        </svg>
        <svg className="mr-[19px] h-[34px] w-[33px]" viewBox="0 0 33 34" fill="none">
          <path d="M20 17v15M4 31.500H31.500V5z" stroke="white" strokeWidth="2.400" />
          <path d="M20 14L1 33h19z" fill="white" />
        </svg>
        <svg className="mr-[11px] h-[35px] w-[21px]" viewBox="0 0 21 35" fill="white">
          <path d="M6 0h9v3h3a3 3 0 0 1 3 3v1H0V6a3 3 0 0 1 3-3h3zM0 8.500h21V32a3 3 0 0 1-3 3H3a3 3 0 0 1-3-3z" />
        </svg>
        <span className="tracking-[-0.8px]">94%</span>
      </div>
    </div>
  );
}

function OutlinedField({ label, value, error, className, children }: { label: string; value?: string; error?: boolean; className?: string; children?: React.ReactNode }) {
  return (
    <div
      className={`relative flex h-[147px] items-center rounded-[10.5px] border-[3px] pl-[39px] ${error ? "border-[#b3261e] text-[#b3261e]" : "border-[#79747e] text-[#49454f]"} ${className ?? ""}`}
    >
      {value ? (
        <>
          <span className="absolute -top-[24px] left-[29px] bg-[#eee8f4] px-[10px] text-[31.5px] leading-[42px] tracking-[0.85px]">{label}</span>
          <span className="text-[36.75px] text-[#1c1b1f]">{value}</span>
        </>
      ) : (
        <span className="text-[42px] tracking-[1.2px]">{label}</span>
      )}
      {children}
    </div>
  );
}

function Switch() {
  return (
    <div className="flex h-[84px] w-[137px] items-center justify-end rounded-full bg-[#6750a4] pr-[11px]">
      <div className="h-[63px] w-[63px] rounded-full bg-white" />
    </div>
  );
}

function SettingText({ title, sub }: { title: string; sub: string }) {
  return (
    <div className="ml-[21px] flex-1 text-[36.75px] leading-[52.5px]">
      <div className="font-medium tracking-[0.1px]">{title}</div>
      <div className="tracking-[0.3px]">{sub}</div>
    </div>
  );
}

export default function App() {
  return (
    <div className="relative flex h-[2400px] w-[1080px] flex-col overflow-hidden bg-black font-['Roboto',sans-serif]">
      <StatusBar />
      <div className="flex h-[125px] shrink-0 items-stretch justify-between border-b-2 border-[#575458] bg-[#656266] text-[36.75px] font-medium text-[#292044]">
        <div className="-mb-[2px] flex w-[270px] items-center border-b-[8px] border-[#292044] pl-[73px] pt-[7px]">Map</div>
        <div className="flex w-[270px] items-center justify-end pr-[46px] pt-[2px]">Settin…</div>
      </div>
      <div className="relative h-[2080px] shrink-0 overflow-hidden">
        <CityMap />
        <div className="absolute right-[42px] top-[1460px] flex flex-col items-end text-[#6f6f6f]">
          <div className="mb-[21px] flex h-[74px] items-center rounded-full bg-[#12125f] px-[32px] text-[31px] tracking-[1.2px]">Follow</div>
          <div className="mb-[21px] flex h-[147px] w-[147px] items-center justify-center rounded-full bg-[#000066]">
            <Icon d={icons.locate} className="h-[63px] w-[63px]" />
          </div>
          <div className="mb-[21px] flex h-[147px] w-[147px] items-center justify-center rounded-full bg-[#363636]">
            <Icon d={icons.people} className="h-[63px] w-[63px]" />
          </div>
          <div className="flex h-[147px] w-[147px] items-center justify-center rounded-full bg-[#660000]">
            <Icon d={icons.play} className="h-[63px] w-[63px]" />
          </div>
        </div>
      </div>
      <div className="flex h-[63px] shrink-0 items-center justify-center bg-black">
        <div className="h-[10px] w-[284px] rounded-full bg-[#eaeaea]" />
      </div>

      <div role="dialog" className="absolute left-[120px] top-[132px] flex h-[2205px] w-[840px] flex-col rounded-[73.5px] bg-[#eee8f4] px-[63px] pt-[63px] text-[#49454f]">
        <h1 className="text-[63px] leading-[84px] text-[#1c1b1f]">New Activity</h1>

        <div className="relative mt-[42px] h-[94px] overflow-hidden rounded-b-[31.5px] bg-[#fff1de] pl-[116px] pt-[15px] text-[31.5px] leading-[42px] tracking-[0.3px] text-[#888888]">
          <Icon d={icons.gps} className="absolute -top-[51px] left-[32px] h-[63px] w-[63px] text-[#ff9800]" />
          acquired
        </div>

        <OutlinedField label="Event Name *" error className="mt-[63px]" />
        <p className="mt-[11px] px-[42px] text-[31.5px] leading-[42px] tracking-[0.87px] text-[#b3261e]">Event name is required (current date will be used if empty)</p>

        <div className="mt-[63px] flex">
          <OutlinedField label="Event Date" value="2025-08-02" className="w-[588px]" />
          <div className="-mt-[21px] flex h-[168px] flex-1 items-center justify-center">
            <Icon d={icons.calendar} className="h-[63px] w-[63px]" />
          </div>
        </div>

        <OutlinedField label="Sport Type" value="Running" className="mt-[63px] justify-between pr-[28px]">
          <Icon d={icons.arrow} className="h-[63px] w-[63px]" />
        </OutlinedField>
        <OutlinedField label="Comment" className="mt-[63px]" />
        <OutlinedField label="Clothing" className="mt-[63px]" />

        <div className="mt-[53px] flex h-[105px] items-center">
          <Icon d={icons.heart} className="h-[63px] w-[63px]" />
          <SettingText title="Heart Rate Sensor" sub="No sensor selected" />
          <button className="h-[105px] w-[229px] rounded-full bg-[#6750a4] text-[36.75px] font-medium text-white">Select</button>
        </div>
        <div className="mt-[62px] flex h-[105px] items-center">
          <Icon d={icons.cloud} className="h-[63px] w-[63px]" />
          <SettingText title="Send data to server" sub="Send data to server" />
          <Switch />
        </div>
        <div className="mt-[74px] flex h-[84px] items-center justify-between text-[36.75px] tracking-[0.3px]">
          <span className="pt-[1px]">Show Path on Map</span>
          <Switch />
        </div>

        <div className="mt-[116px] flex h-[105px] items-center justify-end text-[36.75px] font-medium tracking-[-0.1px]">
          <button className="mr-[55px] text-[#6750a4]">Cancel</button>
          <button className="h-[105px] w-[416px] rounded-full bg-[#d6d0db] text-[#888888]">Waiting for GPS...</button>
        </div>
      </div>
    </div>
  );
}
